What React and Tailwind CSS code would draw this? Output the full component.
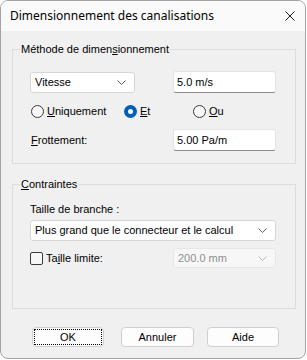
import React from 'react';

const uiFont = { fontFamily: '"Liberation Sans", Arial, sans-serif' };

// chevron used in the combo boxes
const Chevron = ({ color = '#5f5f5f' }) => (
  <svg width="9" height="5" viewBox="0 0 9 5" className="shrink-0">
    <path d="M0.5 0.5 L4.5 4.5 L8.5 0.5" fill="none" stroke={color} strokeWidth="1" />
  </svg>
);

const Combo = ({ value, className = '', disabled = false }) => (
  <div
    className={`flex items-center justify-between rounded-[3px] border pl-[4px] pr-[8px] ${
      disabled ? 'border-[#e6e6e6] bg-[#f7f7f7] text-[#8f8f8f]' : 'border-[#d6d6d6] bg-white text-black'
    } ${className}`}
  >
    <span className="leading-[13px]">{value}</span>
    <Chevron color={disabled ? '#b8b8b8' : '#5f5f5f'} />
  </div>
);

const TextField = ({ value }) => (
  <div className="flex h-[22px] w-[103px] items-center rounded-[3px] border border-[#e3e3e3] border-b-[#8b8b8b] bg-white pl-[3px]">
    <span className="leading-[13px]">{value}</span>
  </div>
);

const Radio = ({ checked, children, className = '' }) => (
  <div className={`flex items-center ${className}`}>
    {checked ? (
      <span className="flex h-[13px] w-[13px] items-center justify-center rounded-full bg-[#005fb8]">
        <span className="h-[5px] w-[5px] rounded-full bg-white" />
      </span>
    ) : (
      <span className="h-[13px] w-[13px] rounded-full border border-[#3b3b3b] bg-[#f7f7f7]" />
    )}
    <span className="ml-[3px] leading-[13px]">{children}</span>
  </div>
);

const Button = ({ children, focused, className = '' }) => (
  <div className={`flex h-[20px] items-center justify-center rounded-[4px] border border-[#cfcfcf] bg-[#fdfdfd] p-[1px] ${className}`}>
    <div
      className={`flex h-full w-full items-center justify-center ${
        focused ? 'border border-dotted border-black' : ''
      }`}
    >
      <span className="leading-[13px]">{children}</span>
    </div>
  </div>
);

const App = () => {
  return (
    <div className="h-[360px] w-[307px] bg-white text-[11px] text-black" style={uiFont}>
      <div className="flex h-[359px] w-[306px] flex-col overflow-hidden rounded-[8px] border border-[#a3a3a3] bg-[#f0f0f0]">
        {/* title bar */}
        <div className="flex h-[30px] shrink-0 items-center justify-between bg-[#fafafa] pl-[9px] pr-[10px]">
          <span className="text-[12px]" style={{ fontFamily: '"Noto Sans", "Open Sans", sans-serif' }}>
            Dimensionnement des canalisations
          </span>
          <svg width="10" height="10" viewBox="0 0 10 10">
            <path d="M0.5 0.5 L9.5 9.5 M9.5 0.5 L0.5 9.5" stroke="#1a1a1a" strokeWidth="1" />
          </svg>
        </div>

        <div className="flex flex-col pl-[11px] pt-[12px]">
          {/* Méthode de dimensionnement */}
          <fieldset className="w-[284px] border border-[#dcdcdc]">
            <legend className="ml-[7px] px-[1px] leading-[13px]">
              Méthode de dimen<u>s</u>ionnement
            </legend>
            <div className="flex flex-col pb-[12px] pl-[17px] pt-[15px]">
              <div className="flex items-end">
                <Combo value="Vitesse" className="h-[21px] w-[105px]" />
                <div className="ml-[38px]">
                  <TextField value="5.0 m/s" />
                </div>
              </div>
              <div className="mt-[12px] flex pl-[1px]">
                <Radio className="w-[93px]">
                  <u>U</u>niquement
                </Radio>
                <Radio checked className="w-[69px]">
                  <u>E</u>t
                </Radio>
                <Radio>
                  <u>O</u>u
                </Radio>
              </div>
              <div className="mt-[11px] flex items-center">
                <span className="w-[143px] pl-[1px] leading-[13px]">
                  <u>F</u>rottement:
                </span>
                <TextField value="5.00 Pa/m" />
              </div>
            </div>
          </fieldset>

          {/* Contraintes */}
          <fieldset className="mt-[14px] w-[284px] border border-[#dcdcdc]">
            <legend className="ml-[7px] px-[1px] leading-[13px]">
              <u>C</u>ontraintes
            </legend>
            <div className="flex flex-col pb-[40px] pl-[17px] pt-[12px]">
              <span className="leading-[13px]">Taille de branche :</span>
              <Combo value="Plus grand que le connecteur et le calcul" className="mt-[4px] h-[21px] w-[246px]" />
              <div className="mt-[7px] flex items-center">
                <div className="flex w-[143px] items-center">
                  <span className="h-[13px] w-[13px] rounded-[2px] border border-[#3b3b3b] bg-[#f7f7f7]" />
                  <span className="ml-[3px] leading-[13px]">
                    Ta<u>i</u>lle limite:
                  </span>
                </div>
                <Combo value="200.0 mm" disabled className="h-[20px] w-[103px]" />
              </div>
            </div>
          </fieldset>

          {/* buttons */}
          <div className="mt-[18px] flex pl-[20px]">
            <Button focused className="w-[72px]">OK</Button>
            <Button className="ml-[17px] w-[73px]">Annuler</Button>
            <Button className="ml-[13px] w-[72px]">Aide</Button>
          </div>
        </div>
      </div>
    </div>
  );
};

export default App;
